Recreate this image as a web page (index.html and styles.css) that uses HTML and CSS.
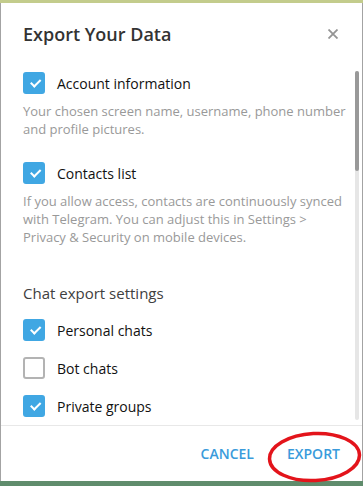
FILE: index.html
```html
<!DOCTYPE html>
<html lang="en">
<head>
    <meta charset="UTF-8">
    <title>Export Your Data</title>
    <link rel="stylesheet" href="styles.css">
</head>
<body>
    <div class="dialog">
        <div class="header">
            <h1 class="title">Export Your Data</h1>
            <svg class="close" width="10" height="10" viewBox="0 0 10 10">
                <path d="M0.5 0.5 L9.5 9.5 M9.5 0.5 L0.5 9.5" stroke="#959595" stroke-width="1.8" fill="none"/>
            </svg>
        </div>
        <div class="body">
            <div class="content">
                <div class="option">
                    <span class="box checked"></span>
                    <span class="label">Account information</span>
                </div>
                <p class="desc">Your chosen screen name, username, phone number and profile pictures.</p>

                <div class="option gap-large">
                    <span class="box checked"></span>
                    <span class="label">Contacts list</span>
                </div>
                <p class="desc">If you allow access, contacts are continuously synced with Telegram. You can adjust this in Settings &gt; Privacy &amp; Security on mobile devices.</p>

                <h2 class="section">Chat export settings</h2>
                <div class="option">
                    <span class="box checked"></span>
                    <span class="label">Personal chats</span>
                </div>
                <div class="option gap">
                    <span class="box"></span>
                    <span class="label">Bot chats</span>
                </div>
                <div class="option gap">
                    <span class="box checked"></span>
                    <span class="label">Private groups</span>
                </div>
            </div>
            <div class="scrollbar"><div class="thumb"></div></div>
        </div>
        <div class="footer">
            <button class="btn">Cancel</button>
            <button class="btn">Export</button>
            <svg class="circle" width="96" height="54" viewBox="0 0 96 54">
                <ellipse cx="47.5" cy="26" rx="45" ry="23.5" fill="none" stroke="#e3141b" stroke-width="3.5" transform="rotate(-3 47.5 26)"/>
            </svg>
        </div>
    </div>
</body>
</html>
```

FILE: styles.css
```css
body {
    margin: 0;
    height: 486px;
    overflow: hidden;
    font-family: "Open Sans", Arial, sans-serif;
    background: linear-gradient(to bottom, #c3cc8c 0, #c3cc8c 3px, #8fa77c 50%, #5f8c6c 100%);
}
.dialog {
    margin-top: 3px;
    width: 361px;
    height: 478px;
    background: #fff;
    border-left: 1px solid #a3a3a3;
    border-right: 1px solid #a3a3a3;
    display: flex;
    flex-direction: column;
}
.header {
    height: 57px;
    padding: 19px 22px 0 22px;
    box-sizing: border-box;
    display: flex;
    justify-content: space-between;
}
.title {
    margin: 0;
    font-size: 18px;
    font-weight: 600;
    line-height: 24px;
    color: #333;
}
.close {
    margin-top: 7px;
    margin-right: 2px;
}
.body {
    height: 365px;
    display: flex;
    border-bottom: 1px solid #e8e8e8;
}
.content {
    flex: 1;
    overflow: hidden;
    padding: 12px 0 0 22px;
}
.option {
    display: flex;
    align-items: center;
    height: 22px;
}
.option.gap {
    margin-top: 16px;
}
.option.gap-large {
    margin-top: 24px;
}
.box {
    width: 22px;
    height: 22px;
    box-sizing: border-box;
    border: 2px solid #b3b3b3;
    border-radius: 3px;
    margin-right: 12px;
    flex-shrink: 0;
    position: relative;
}
.box.checked {
    background: #40a7e3;
    border-color: #40a7e3;
}
.box.checked::after {
    content: "";
    position: absolute;
    left: 5px;
    top: 3px;
    width: 8px;
    height: 4px;
    border-left: 2.5px solid #fff;
    border-bottom: 2.5px solid #fff;
    transform: rotate(-45deg) translate(-1px, 2px);
}
.label {
    font-size: 14px;
    color: #111;
}
.desc {
    margin: 8px 6px 0 0;
    font-size: 13px;
    line-height: 18px;
    color: #999;
}
.section {
    margin: 36px 0 15px 0;
    font-size: 15px;
    font-weight: 400;
    line-height: 22px;
    color: #404040;
}
.scrollbar {
    width: 4px;
    margin: 11px 3px 5px 0;
    background: #e6e6e6;
    border-radius: 2px;
}
.thumb {
    height: 100px;
    background: #999;
    border-radius: 2px;
}
.footer {
    flex: 1;
    display: flex;
    justify-content: flex-end;
    align-items: center;
    gap: 33px;
    padding: 0 22px 0 0;
    position: relative;
}
.btn {
    border: none;
    background: none;
    padding: 0;
    font-family: "Open Sans", Arial, sans-serif;
    font-size: 14px;
    font-weight: 600;
    text-transform: uppercase;
    color: #3a9bdb;
}
.circle {
    position: absolute;
    right: -1px;
    top: 5px;
}
```
